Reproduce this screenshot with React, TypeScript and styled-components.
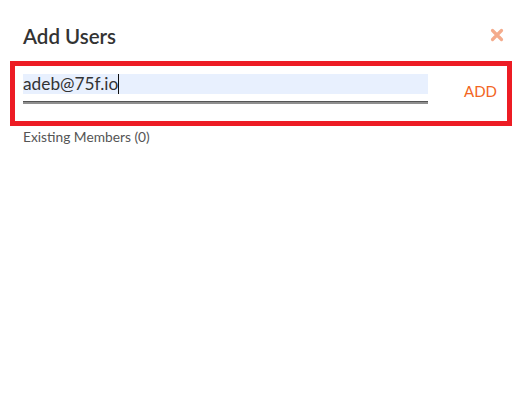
import styled, { createGlobalStyle } from "styled-components";

const GlobalStyle = createGlobalStyle`
  html, body {
    margin: 0;
    background: #fff;
    font-family: Lato, "Open Sans", sans-serif;
  }
`;

const Modal = styled.div`
  width: 531px;
  height: 410px;
  box-sizing: border-box;
  padding: 23px 19px 0 10px;
  overflow: hidden;
`;

const Header = styled.header`
  display: flex;
  justify-content: space-between;
  align-items: center;
  height: 26px;
  padding: 0 8px 0 13px;
  margin-bottom: 12px;
`;

const Title = styled.h2`
  margin: 0;
  font-size: 20.5px;
  line-height: 24px;
  font-weight: 600;
  color: #333;
`;

const CloseIcon = styled.svg`
  width: 14px;
  height: 14px;
  display: block;
  margin-top: -3px;
`;

const Highlight = styled.div`
  box-sizing: border-box;
  height: 65px;
  width: 502px;
  border: 5px solid #ed1c24;
  padding: 8px 10px 0 8px;
  display: flex;
  justify-content: space-between;
`;

const Field = styled.div`
  width: 405px;
`;

const Value = styled.div`
  height: 20px;
  background: #e8f0fe;
  font-size: 17.3px;
  line-height: 18px;
  color: #333;
  display: flex;
  align-items: center;
`;

const Caret = styled.span`
  width: 1px;
  height: 20px;
  background: #111;
`;

const Underline = styled.div`
  height: 2px;
  margin-top: 7px;
  border-top: 1px solid #555;
  background: #8f8f8f;
`;

const AddButton = styled.button`
  border: 0;
  background: none;
  padding: 0;
  height: 20px;
  margin-top: 7px;
  font-family: inherit;
  font-size: 15px;
  line-height: 20px;
  color: #f26522;
`;

const Members = styled.p`
  margin: 3px 0 0 13px;
  font-size: 13.75px;
  line-height: 16px;
  color: #555;
`;

export default function App() {
  return (
    <>
      <GlobalStyle />
      <Modal>
        <Header>
          <Title>Add Users</Title>
          <CloseIcon viewBox="0 0 14 14">
            <path
              d="M2.5 2.5L11.5 11.5M11.5 2.5L2.5 11.5"
              stroke="#f4ab8c"
              strokeWidth="3.2"
              strokeLinecap="round"
            />
          </CloseIcon>
        </Header>
        <Highlight>
          <Field>
            <Value>
              adeb@75f.io
              <Caret />
            </Value>
            <Underline />
          </Field>
          <AddButton>ADD</AddButton>
        </Highlight>
        <Members>Existing Members (0)</Members>
      </Modal>
    </>
  );
}
